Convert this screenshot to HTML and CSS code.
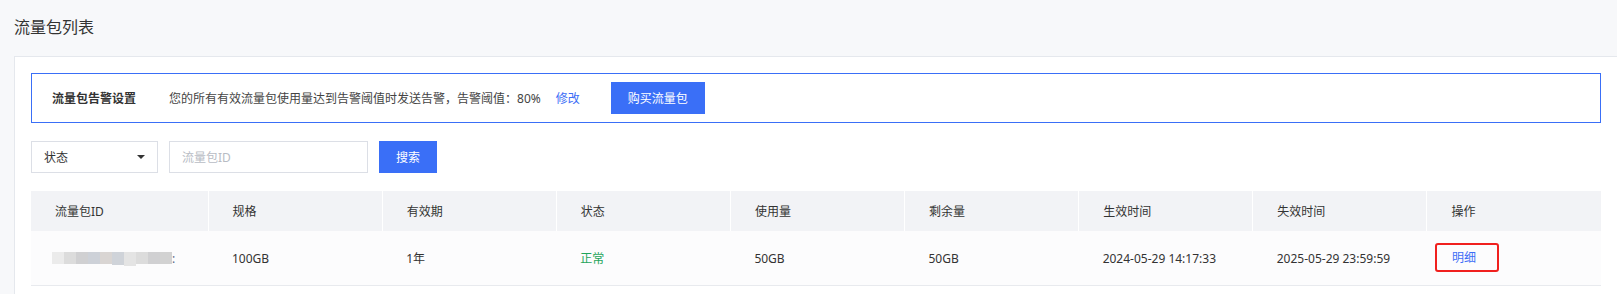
FILE: index.html
```html
<!DOCTYPE html>
<html lang="zh-CN">
<head>
    <meta charset="UTF-8">
    <meta name="viewport" content="width=device-width, initial-scale=1.0">
    <title>流量包列表</title>
    <link rel="stylesheet" href="styles.css">
</head>
<body>
    <h1 class="page-title">流量包列表</h1>

    <div class="card">
        <!-- alert setting bar -->
        <div class="alert-bar">
            <span class="alert-label">流量包告警设置</span>
            <span class="alert-desc">您的所有有效流量包使用量达到告警阈值时发送告警，告警阈值：80%</span>
            <a class="text-link" href="#">修改</a>
            <button class="btn-primary buy-btn">购买流量包</button>
        </div>

        <!-- filters -->
        <div class="filters">
            <div class="select-box">
                <span>状态</span>
                <span class="caret"></span>
            </div>
            <input type="text" class="id-input" placeholder="流量包ID">
            <button class="btn-primary search-btn">搜索</button>
        </div>

        <table class="pkg-table">
            <colgroup>
                <col class="col-id">
                <col><col><col><col><col><col><col><col>
            </colgroup>
            <thead>
                <tr>
                    <th>流量包ID</th>
                    <th>规格</th>
                    <th>有效期</th>
                    <th>状态</th>
                    <th>使用量</th>
                    <th>剩余量</th>
                    <th>生效时间</th>
                    <th>失效时间</th>
                    <th>操作</th>
                </tr>
            </thead>
            <tbody>
                <tr>
                    <td>
                        <span class="masked">
                            <i class="m1"></i><i class="m2"></i><i class="m3"></i><i class="m4"></i><i class="m5"></i><i class="m6"></i><i class="m7"></i><i class="m2"></i><i class="m3"></i><i class="m8"></i>
                        </span><span class="masked-end">:</span>
                    </td>
                    <td>100GB</td>
                    <td>1年</td>
                    <td class="status-ok">正常</td>
                    <td>50GB</td>
                    <td>50GB</td>
                    <td>2024-05-29 14:17:33</td>
                    <td>2025-05-29 23:59:59</td>
                    <td><a class="text-link detail-link" href="#">明细</a></td>
                </tr>
            </tbody>
        </table>
    </div>
</body>
</html>
```

FILE: styles.css
```css
body {
    margin: 0;
    background-color: #f7f8fa;
    font-family: "Noto Sans", "Noto Sans CJK SC", sans-serif;
    font-size: 12px;
    color: #333;
}

.page-title {
    margin: 0;
    padding: 15px 14px 17px;
    font-size: 16px;
    font-weight: normal;
    line-height: 24px;
    color: #333;
}

.card {
    margin-left: 14px;
    padding: 16px;
    background-color: #fff;
    border: 1px solid #e5e8ed;
    border-right: none;
    min-height: 300px;
}

.alert-bar {
    display: flex;
    align-items: center;
    height: 32px;
    padding: 8px 20px;
    border: 1px solid #3a6ff7;
}

.alert-label {
    font-weight: bold;
    color: #333;
    margin-right: 33px;
}

.alert-desc {
    color: #444;
    margin-right: 15px;
}

.text-link {
    color: #3d6ef6;
    text-decoration: none;
}

.btn-primary {
    height: 32px;
    border: none;
    background-color: #3a6ff7;
    color: #fff;
    font-family: inherit;
    font-size: 12px;
    cursor: pointer;
}

.buy-btn {
    width: 94px;
    margin-left: 31px;
}

.filters {
    display: flex;
    gap: 11px;
    margin: 18px 0;
}

.select-box {
    display: flex;
    align-items: center;
    justify-content: space-between;
    box-sizing: border-box;
    width: 127px;
    height: 32px;
    padding: 0 12px;
    border: 1px solid #dcdfe6;
    color: #333;
}

.caret {
    width: 0;
    height: 0;
    border-left: 4px solid transparent;
    border-right: 4px solid transparent;
    border-top: 4px solid #333;
}

.id-input {
    box-sizing: border-box;
    width: 199px;
    height: 32px;
    padding: 0 12px;
    border: 1px solid #dcdfe6;
    font-family: inherit;
    font-size: 12px;
    outline: none;
}

.id-input::placeholder {
    color: #b8bcc4;
}

.search-btn {
    width: 58px;
}

.pkg-table {
    width: 100%;
    border-collapse: collapse;
    table-layout: fixed;
}

.pkg-table .col-id {
    width: 177px;
}

.pkg-table th {
    height: 40px;
    padding: 0 0 0 24px;
    text-align: left;
    font-weight: normal;
    color: #333;
    background-color: #f2f3f6;
    border-right: 1px solid #fff;
}

.pkg-table th:last-child {
    border-right: none;
}

.pkg-table td {
    height: 54px;
    padding: 0 0 0 24px;
    color: #333;
    background-color: #fcfcfd;
    border-bottom: 1px solid #e8eaee;
}

.status-ok {
    color: #1fa55b !important;
}

.masked {
    display: inline-flex;
    vertical-align: middle;
    margin-left: -3px;
}

.masked i {
    display: block;
    width: 12px;
    height: 12px;
}

.masked .m1 { background: #ebebeb; }
.masked .m2 { background: #dcdcdc; }
.masked .m3 { background: #d0d0d2; }
.masked .m4 { background: #cdd1d8; }
.masked .m5 { background: #d9d5d3; }
.masked .m6 { background: #cfd3d9; height: 13px; }
.masked .m7 { background: #e4e4e4; height: 14px; }
.masked .m8 { background: #d2d2d2; }

.masked-end {
    color: #5a6a8a;
    vertical-align: middle;
}

.detail-link {
    position: relative;
    display: inline-block;
    line-height: 18px;
    margin-left: 1px;
}

/* red highlight box */
.detail-link::after {
    content: "";
    position: absolute;
    left: -17px;
    right: -23px;
    top: -6px;
    bottom: -5px;
    border: 2px solid #f0201e;
    border-radius: 3px;
}
```
